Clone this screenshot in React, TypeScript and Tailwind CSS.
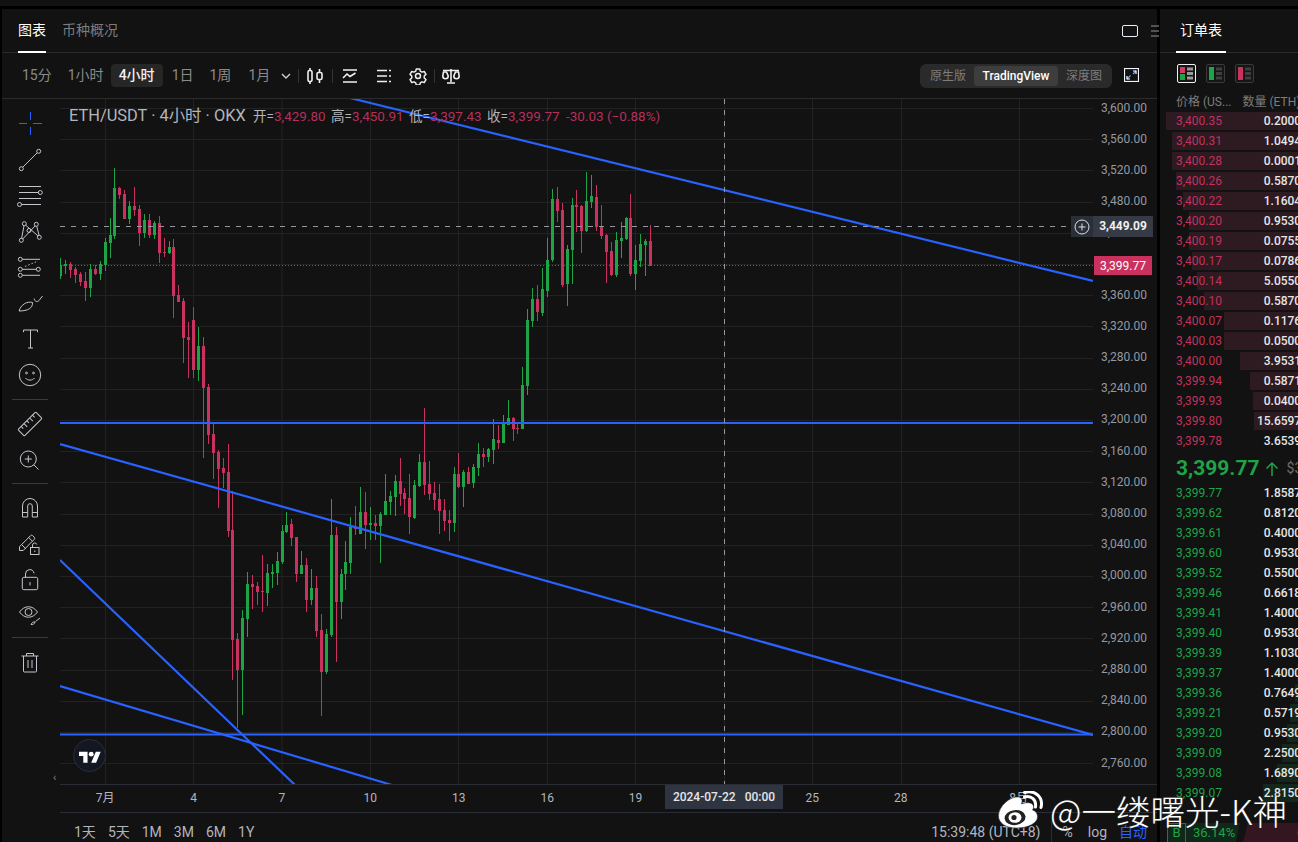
import type { ReactNode } from "react"

const UP = "#1fa347"
const DOWN = "#c9325f"
const BLUE = "#2962ff"

// rows are [center x, wick top, body top, body bottom, wick bottom, up?] read off 3x crops
type Row = [number, number, number, number, number, number]
const fromCrop = (ox: number, oy: number, rows: Row[]): Row[] =>
  rows.map(([x, a, b, c, d, u]) => [ox + x / 3, oy + a / 3, oy + b / 3, oy + c / 3, oy + d / 3, u])

const candles: Row[] = [
  ...fromCrop(60, 150, [
    [1, 324, 345, 378, 387, 1], [16, 330, 342, 348, 372, 1], [31, 336, 342, 360, 384, 0], [46, 351, 357, 375, 399, 0],
    [61, 366, 372, 396, 408, 0], [76, 366, 393, 414, 453, 0], [91, 342, 357, 414, 441, 1], [106, 345, 357, 372, 375, 0],
    [121, 333, 342, 372, 390, 1], [136, 264, 276, 345, 363, 1], [151, 204, 255, 279, 324, 1], [163, 54, 114, 258, 267, 1],
    [178, 111, 114, 135, 147, 0], [193, 120, 132, 207, 207, 0], [208, 153, 168, 207, 222, 1], [223, 111, 168, 180, 198, 0],
    [238, 165, 177, 249, 288, 0], [253, 192, 210, 249, 264, 1], [268, 192, 210, 255, 264, 0], [283, 213, 219, 255, 267, 1],
    [298, 198, 219, 309, 339, 0], [313, 264, 306, 309, 321, 0], [328, 273, 291, 309, 312, 1], [340, 267, 291, 438, 504, 0],
    [355, 405, 435, 456, 456, 0], [370, 444, 453, 564, 640, 0], [385, 516, 561, 570, 685, 0],
  ]),
  ...fromCrop(180, 340, [
    [40, -100, -60, 90, 114, 0], [55, -40, 18, 90, 123, 1], [70, -10, 18, 144, 354, 0], [85, 132, 141, 285, 312, 0],
    [100, 252, 282, 339, 417, 0], [115, 330, 336, 387, 504, 0], [130, 354, 384, 399, 444, 0], [145, 312, 396, 573, 591, 0],
    [157, 453, 570, 900, 1020, 0], [172, 879, 897, 990, 1164, 0], [187, 810, 834, 990, 1125, 1], [202, 696, 732, 837, 891, 1],
    [217, 705, 732, 741, 807, 0], [232, 726, 738, 756, 795, 0], [247, 645, 753, 756, 816, 0], [262, 672, 699, 759, 798, 1],
    [277, 672, 696, 702, 744, 1], [292, 636, 663, 699, 735, 1], [307, 555, 573, 666, 672, 1], [319, 516, 555, 576, 579, 1],
    [334, 537, 552, 594, 618, 0], [349, 591, 591, 702, 726, 0], [364, 633, 675, 702, 702, 1], [379, 654, 675, 780, 816, 0],
    [394, 687, 744, 780, 795, 1], [409, 708, 744, 873, 891, 0], [424, 822, 870, 996, 1128, 0], [439, 867, 882, 996, 1002, 1],
    [454, 477, 585, 885, 891, 1], [469, 561, 585, 786, 966, 0], [484, 687, 702, 786, 837, 1], [496, 603, 666, 702, 750, 1],
    [511, 531, 561, 669, 702, 1], [526, 498, 561, 567, 585, 0],
  ]),
  ...fromCrop(360, 350, [
    [1, 411, 486, 552, 552, 1], [16, 426, 486, 525, 597, 0], [31, 471, 519, 525, 570, 1], [46, 495, 519, 528, 570, 0],
    [61, 486, 492, 528, 640, 1], [76, 372, 453, 495, 495, 1], [91, 423, 438, 456, 495, 1], [106, 375, 393, 441, 498, 1],
    [121, 324, 393, 432, 468, 0], [133, 414, 429, 447, 492, 0], [148, 372, 444, 501, 552, 0], [163, 390, 405, 504, 507, 1],
    [178, 312, 336, 408, 411, 1], [193, 174, 336, 405, 435, 0], [208, 333, 402, 432, 450, 0], [223, 396, 429, 450, 480, 0],
    [238, 402, 447, 483, 552, 0], [253, 447, 480, 513, 543, 0], [268, 480, 510, 519, 573, 0], [283, 351, 372, 519, 546, 1],
    [295, 309, 372, 411, 414, 0], [310, 360, 366, 411, 471, 1], [325, 351, 366, 402, 402, 0], [340, 342, 351, 399, 414, 1],
    [355, 279, 312, 354, 378, 1], [370, 294, 312, 321, 351, 0], [385, 294, 297, 321, 336, 1], [400, 207, 267, 300, 342, 1],
    [415, 225, 270, 279, 297, 0], [430, 195, 222, 279, 279, 1], [445, 150, 204, 225, 225, 1], [460, 201, 204, 237, 273, 0],
    [472, 216, 234, 237, 252, 0], [487, 51, 105, 237, 237, 1],
  ]),
  ...fromCrop(500, 160, [
    [82, 447, 480, 678, 705, 1], [97, 384, 417, 483, 501, 1], [112, 375, 417, 456, 483, 0], [127, 324, 387, 459, 468, 1],
    [142, 234, 300, 393, 411, 1], [157, 87, 117, 300, 306, 1], [172, 81, 117, 153, 186, 0], [187, 129, 150, 375, 381, 0],
    [202, 255, 267, 372, 438, 1], [217, 114, 135, 270, 372, 1], [229, 90, 135, 141, 216, 0], [244, 135, 138, 213, 279, 0],
    [259, 36, 123, 213, 216, 1], [274, 45, 108, 126, 144, 1], [289, 75, 111, 201, 213, 0], [304, 135, 201, 228, 237, 0],
    [319, 222, 225, 276, 369, 0], [334, 246, 273, 345, 348, 0], [349, 216, 240, 345, 351, 1], [364, 186, 234, 243, 294, 1],
    [379, 171, 174, 237, 240, 1], [391, 102, 174, 342, 348, 0], [406, 255, 300, 342, 390, 1], [421, 222, 252, 303, 321, 1],
    [436, 237, 243, 255, 348, 1], [451, 195, 243, 318, 318, 0],
  ]),
]

const asks = [
  ["3,400.35", "0.20000", 1166], ["3,400.31", "1.04940", 1172], ["3,400.28", "0.00010", 1172], ["3,400.26", "0.58700", 1176],
  ["3,400.22", "1.16040", 1183], ["3,400.20", "0.95300", 1189], ["3,400.19", "0.07550", 1189], ["3,400.17", "0.07860", 1192],
  ["3,400.14", "5.05500", 1197], ["3,400.10", "0.58700", 1204], ["3,400.07", "0.11760", 1224], ["3,400.03", "0.05000", 1224],
  ["3,400.00", "3.95310", 1240], ["3,399.94", "0.58710", 1250], ["3,399.93", "0.04000", 1253], ["3,399.80", "15.65970", 1254],
  ["3,399.78", "3.65390", 1298],
] as const

const bids = [
  ["3,399.77", "1.85870", 1298], ["3,399.62", "0.81200", 1298], ["3,399.61", "0.40000", 1298], ["3,399.60", "0.95300", 1298],
  ["3,399.52", "0.55000", 1298], ["3,399.46", "0.66180", 1298], ["3,399.41", "1.40000", 1298], ["3,399.40", "0.95300", 1298],
  ["3,399.39", "1.10300", 1298], ["3,399.37", "1.40000", 1297], ["3,399.36", "0.76490", 1295], ["3,399.21", "0.57190", 1290],
  ["3,399.20", "0.95300", 1287], ["3,399.09", "2.25000", 1282], ["3,399.08", "1.68900", 1277], ["3,399.07", "2.81500", 1263],
] as const

const priceLabels = [
  "3,600.00", "3,560.00", "3,520.00", "3,480.00", "3,440.00", "3,400.00", "3,360.00", "3,320.00", "3,280.00", "3,240.00", "3,200.00",
  "3,160.00", "3,120.00", "3,080.00", "3,040.00", "3,000.00", "2,960.00", "2,920.00", "2,880.00", "2,840.00", "2,800.00", "2,760.00",
]

function Chart() {
  const gridX = [105, 193, 281.5, 370, 458, 547, 635, 724, 812, 901, 1019]
  const gridY = priceLabels.map((_, i) => Math.round(108 + i * 31.2))
  return (
    <svg width="1033" height="685" viewBox="60 99 1033 685" className="block shrink-0">
      {gridY.map((y) => (
        <line key={y} x1="60" x2="1093" y1={y + 0.5} y2={y + 0.5} stroke="#222222" />
      ))}
      {gridX.map((x) => (
        <line key={x} x1={x + 0.5} x2={x + 0.5} y1="99" y2="784" stroke="#222222" />
      ))}
      <line x1="60" x2="1093" y1="265.5" y2="265.5" stroke={DOWN} strokeDasharray="1 2" />
      {candles.map(([x, a, b, c, d, up], i) => (
        <g key={i} fill={up ? UP : DOWN} shapeRendering="crispEdges">
          <rect x={Math.round(x)} y={a} width="1" height={d - a} />
          <rect x={Math.round(x) - 1} y={b} width="3" height={Math.max(c - b, 1)} />
        </g>
      ))}
      <g stroke={BLUE} strokeWidth="2.2">
        <line x1="350" y1="98" x2="1093" y2="281" />
        <line x1="60" y1="423" x2="1093" y2="423" />
        <line x1="60" y1="444" x2="1093" y2="735" />
        <line x1="60" y1="734.5" x2="1093" y2="734.5" />
        <line x1="60" y1="560" x2="295" y2="785" />
        <line x1="60" y1="686" x2="392" y2="785" />
      </g>
      <line x1="60" x2="1070" y1="226.5" y2="226.5" stroke="#9598a1" strokeDasharray="5 6" />
      <line x1="724.5" x2="724.5" y1="99" y2="784" stroke="#9598a1" strokeDasharray="5 6" />
    </svg>
  )
}

function Tool({ h = "h-[36px]", children }: { h?: string; children: ReactNode }) {
  return (
    <div className={`${h} flex items-center justify-center shrink-0`}>
      <svg width="28" height="28" viewBox="0 0 28 28" fill="none" stroke="#c4c6cc" strokeWidth="1">
        {children}
      </svg>
    </div>
  )
}

function LeftToolbar() {
  return (
    <div className="w-[58px] shrink-0 flex flex-col pt-[6px] pr-[2px]">
      <Tool>
        <path d="M3 14.500h8M17 14.500h9M14.500 3v8M14.500 18v8" stroke={BLUE} strokeWidth="1" shapeRendering="crispEdges" />
      </Tool>
      <Tool>
        <path d="M6.800 22.200 21.200 7.800" />
        <circle cx="5.300" cy="23.700" r="2" />
        <circle cx="22.700" cy="6.300" r="2" />
      </Tool>
      <Tool>
        <path d="M3 5.500h22M3 11.500h19.500M3 17.500h22M5.500 23.500h19.500" />
        <circle cx="24.300" cy="11.500" r="2" />
        <circle cx="3.500" cy="23.500" r="2" />
      </Tool>
      <Tool>
        <path d="M5.600 21.300 8 8.800M9.700 8.200l12.300 10.700M19 9 6.700 22M20.700 9.200l2.400 9.100" />
        <circle cx="8.300" cy="6.700" r="2" />
        <circle cx="20.300" cy="7.300" r="2" />
        <circle cx="5.300" cy="23.300" r="2" />
        <circle cx="23.300" cy="20.300" r="2" />
        <circle cx="13" cy="13.500" r="2" />
      </Tool>
      <Tool>
        <path d="M6.300 6.300H24M6.300 16.300h14M6.300 22.300H24" />
        <path d="M9 13.500 22 8" strokeDasharray="1.500 2" />
        <circle cx="4.300" cy="6.300" r="2" />
        <circle cx="4.300" cy="16.300" r="2" />
        <circle cx="4.300" cy="22.300" r="2" />
        <circle cx="22.300" cy="16.300" r="2" />
      </Tool>
      <Tool>
        <path d="M3 22C5 15.500 11 12 16.500 13.500 17 19 12 22 3 22Z" />
        <path d="M18.200 9.500c.5 3.300 3 4 4.800 2l3.500-4.500" />
      </Tool>
      <Tool>
        <path d="M7.500 5h14M7.500 5v2.200M21.500 5v2.200M14.500 5v18M12 23h5" />
      </Tool>
      <Tool>
        <circle cx="14" cy="14" r="10.700" />
        <circle cx="10.500" cy="12" r="0.900" />
        <circle cx="17.500" cy="12" r="0.900" />
        <path d="M9.500 17c2 2.800 7 2.800 9 0" />
      </Tool>
      <div className="h-px bg-[#3a3a3e] mx-[10px] my-[6px] shrink-0" />
      <Tool>
        <g transform="rotate(-45 14 14)">
          <rect x="1.500" y="9.500" width="25" height="9" rx="1" />
          <path d="M6 9.500v3M10 9.500v4.500M14 9.500v3M18 9.500v4.500M22 9.500v3" />
        </g>
      </Tool>
      <Tool h="h-[35px]">
        <circle cx="12.300" cy="13" r="8" />
        <path d="M18 19l4.500 4.500M12.300 9.500v7M8.800 13h7" />
      </Tool>
      <div className="h-px bg-[#3a3a3e] mx-[10px] my-[6px] shrink-0" />
      <Tool>
        <path d="M6.500 23V12a7.500 7.500 0 0 1 15 0v11h-5.200V12a2.300 2.300 0 0 0-4.600 0v11ZM6.500 18.500h5.200M16.300 18.500h5.200" />
      </Tool>
      <Tool>
        <path d="M3.500 20.500v-3.800L14.500 5.700a1.500 1.500 0 0 1 2.200 0l1.500 1.500a1.500 1.500 0 0 1 0 2.200L7.200 20.500ZM6 15l3.700 3.700M12.700 7.500l3.700 3.700" />
        <rect x="14.500" y="17.500" width="8.500" height="7" />
        <path d="M16.500 17.500v-2.500a2.200 2.200 0 0 1 4.300-.5M18.800 20.500v1.500" />
      </Tool>
      <Tool h="h-[35px]">
        <rect x="6.300" y="11.300" width="15.400" height="12.400" rx="1.500" />
        <path d="M9.500 11.300V8a4.300 4.300 0 0 1 8.500-1M14 16.500v2.500" strokeLinecap="round" />
      </Tool>
      <Tool h="h-[34px]">
        <path d="M3.500 12c5-7 13-7 18 0-5 7-13 7-18 0Z" />
        <circle cx="12.500" cy="12" r="3.500" />
        <path d="M15 24.500c1-2 2.500-3 4-2.500-.5 2-2 3-4 2.500ZM19.500 21.500l4.500-3.500" />
      </Tool>
      <div className="h-px bg-[#3a3a3e] mx-[10px] my-[6px] shrink-0" />
      <Tool>
        <path d="M5.500 8h17M10.500 8V5.500h7V8M7.500 8v15a1 1 0 0 0 1 1h11a1 1 0 0 0 1-1V8M12 12v8M16 12v8" />
      </Tool>
    </div>
  )
}

function TopTools() {
  return (
    <>
      <svg width="20" height="18" viewBox="0 0 20 18" fill="none" stroke="#f0f0f0" strokeWidth="1.600" className="ml-[6px]">
        <rect x="3" y="3.500" width="4" height="11" rx="1.500" />
        <rect x="12" y="5.500" width="5" height="7" rx="1.500" />
        <path d="M5 1v2.500M5 14.500V17M14.500 2v3.500M14.500 12.500V16" />
      </svg>
      <div className="w-px h-[14px] bg-[#333] mx-[7px]" />
      <svg width="18" height="18" viewBox="0 0 18 18" fill="none" stroke="#f0f0f0" strokeWidth="1.600" className="ml-[1px]">
        <path d="M2 3h14M2 15h14M2 11l4-4 3 2.500 5.500-3.500" />
      </svg>
      <svg width="18" height="18" viewBox="0 0 18 18" fill="none" stroke="#f0f0f0" strokeWidth="1.600" className="ml-[16px]">
        <path d="M2 3.500h10M14 3.500h2M2 9h10M14 9h2M2 14.500h10M14 14.500h2" />
      </svg>
      <svg width="18" height="18" viewBox="0 0 24 24" fill="none" stroke="#f0f0f0" strokeWidth="2" strokeLinejoin="round" className="ml-[16px]">
        <path d="M9.700 2.500h4.600l.7 3 2.300 1.300 3-.9 2.300 4-2.300 2.100v2.600l2.300 2.100-2.300 4-3-.9-2.300 1.300-.7 3H9.700l-.7-3-2.300-1.300-3 .9-2.300-4 2.300-2.100v-2.600L1.400 9.900l2.300-4 3 .9L9 5.500Z" />
        <circle cx="12" cy="12" r="3.300" />
      </svg>
      <div className="w-px h-[14px] bg-[#333] mx-[7px]" />
      <svg width="18" height="18" viewBox="0 0 18 18" fill="none" stroke="#f0f0f0" strokeWidth="1.600">
        <path d="M1 3.500h16M9 2v13M5 16h8" />
        <path d="M1.500 5 .8 9a2.700 2.700 0 0 0 5.400 0L4.500 5ZM13.500 5l-1.700 4a2.700 2.700 0 0 0 5.400 0L16.500 5Z" />
      </svg>
    </>
  )
}

function Legend() {
  const pairs = [
    ["开=", "3,429.80"],
    ["高=", "3,450.91"],
    ["低=", "3,397.43"],
    ["收=", "3,399.77"],
  ]
  return (
    <div className="absolute left-[9px] top-[8px] flex items-center text-[13.500px] leading-[18px] text-[#b2b5be] whitespace-nowrap">
      <span className="text-[16.400px] w-[184px]">ETH/USDT · 4小时 · OKX</span>
      {pairs.map(([k, v]) => (
        <span key={k} className="w-[78px]">
          {k}
          <span className="text-[#b5305a]">{v}</span>
        </span>
      ))}
      <span className="text-[#b5305a] ml-px">-30.03 (−0.88%)</span>
    </div>
  )
}

function BookRow({ price, qty, from, up }: { price: string; qty: string; from: number; up?: boolean }) {
  const barLeft = from - 1160
  return (
    <div className="relative h-[20px] flex items-center justify-between pl-[16px] text-[12px] shrink-0">
      {from < 1298 && (
        <div
          className={`absolute top-px bottom-px right-0 ${up ? "bg-[#13271a]" : "bg-[#2e1a21]"}`}
          style={{ left: barLeft }}
        />
      )}
      <span className={`relative ${up ? "text-[#1fa347]" : "text-[#c0335f]"}`}>{price}</span>
      <span className="relative font-medium text-[#e6e6e6] mr-[-10px]">{qty}</span>
    </div>
  )
}

function BookIcon({ active, left, right }: { active?: boolean; left: string; right?: string }) {
  return (
    <svg width="19" height="19" viewBox="0 0 19 19" className="shrink-0">
      <rect x="0.500" y="0.500" width="18" height="18" rx="1.500" fill="#161616" stroke={active ? "#f0f0f0" : "#3a3a3a"} />
      <rect x="3" y="3" width="5" height={right ? 6 : 13} fill={left} />
      {right && <rect x="3" y="10" width="5" height="6" fill={right} />}
      <path d="M10 3.500h6v3h-6zM10 8h6v3h-6zM10 12.500h6v3h-6z" fill={active ? "#9a9a9a" : "#3f3f3f"} />
    </svg>
  )
}

function OrderBook() {
  return (
    <div className="flex-1 min-w-0 relative overflow-hidden bg-[#121212] flex flex-col">
      <div className="h-[44px] shrink-0 border-b border-[#2b2b2b] relative">
        <span className="absolute left-[20px] top-[11px] text-[14px] leading-[20px] text-white">订单表</span>
        <div className="absolute left-[16px] bottom-[-1px] w-[50px] h-[2px] bg-white" />
      </div>
      <div className="flex gap-[10px] pl-[17px] pt-[11px] h-[40px] shrink-0">
        <BookIcon active left="#d13a68" right={UP} />
        <BookIcon left={UP} />
        <BookIcon left={DOWN} />
      </div>
      <div className="h-[18px] flex items-center text-[12px] text-[#7d7d7d] pl-[16px] gap-[11px] whitespace-nowrap shrink-0">
        <span>价格 (US...</span>
        <span>数量 (ETH)</span>
      </div>
      <div className="flex flex-col">
        {asks.map(([p, q, f]) => (
          <BookRow key={p} price={p} qty={q} from={f} />
        ))}
      </div>
      <div className="h-[35px] flex items-center pl-[16px] shrink-0 whitespace-nowrap">
        <span className="text-[21px] font-bold text-[#1fa347]">3,399.77</span>
        <svg width="14" height="16" viewBox="0 0 14 16" fill="none" stroke="#1fa347" strokeWidth="1.500" className="ml-[5px] shrink-0">
          <path d="M7 15V2M1.500 7.500 7 2l5.500 5.500" />
        </svg>
        <span className="ml-[8px] text-[14px] text-[#6e6e6e]">$3,399</span>
      </div>
      <div className="flex flex-col mt-[-3px]">
        {bids.map(([p, q, f]) => (
          <BookRow key={p} price={p} qty={q} from={f} up />
        ))}
      </div>
      <div className="absolute left-0 right-0 bottom-0 h-[19px] flex items-stretch text-[13px] whitespace-nowrap">
        <div className="ml-[7px] w-[19px] border-x border-t border-[#1b7a3c] bg-[#10281a] text-[#1fa347] flex items-center justify-center">B</div>
        <div className="w-[54px] bg-[#10281a] text-[#1fa347] pl-[7px] flex items-center [clip-path:polygon(0_0,100%_0,92%_100%,0_100%)]">36.14%</div>
        <div className="flex-1 ml-[3px] bg-[#33161f] text-[#c0335f] flex items-center justify-end [clip-path:polygon(8%_0,100%_0,100%_100%,0_100%)] mr-[-6px]">6</div>
      </div>
    </div>
  )
}

function Watermark() {
  return (
    <div className="absolute left-[998px] top-[791px] flex items-center gap-[7px] pointer-events-none">
      <svg width="45" height="38" viewBox="0 0 44 38">
        <path d="M18 37C7 37 0 32 0 25 0 15 12 5 20 6c4 .6 4 4 3 7 5-2 11-2 12 2 .4 1.600-.2 2.800-1 4 3 1 5 3 5 7 0 6-9 11-21 11Z" fill="#fff" stroke="#333" strokeWidth="0.600" />
        <ellipse cx="16.500" cy="26.500" rx="10.500" ry="7.500" fill="#222" transform="rotate(-8 17 26)" />
        <ellipse cx="16.500" cy="26.500" rx="6.500" ry="5.200" fill="#fff" />
        <circle cx="15.500" cy="26.500" r="2.600" fill="#222" />
        <path d="M26 6c7-2 12 3 11 10M26 1.500c11-3 19 5 16.500 15" fill="none" stroke="#fff" strokeWidth="3" strokeLinecap="round" />
      </svg>
      <span className="text-[34.500px] leading-[38px] font-light text-white whitespace-nowrap [font-family:'Noto_Sans_CJK_SC',sans-serif] [text-shadow:0_0_2px_#333]">
        @一缕曙光-K神
      </span>
    </div>
  )
}

export default function App() {
  const times = ["4", "7", "10", "13", "16", "19", "22", "25", "28"]
  const font = "[font-family:Roboto,'Noto_Sans_CJK_SC',sans-serif]"
  return (
    <div className={`relative w-[1298px] h-[842px] overflow-hidden bg-black flex flex-col ${font}`}>
      <div className="h-[6px] shrink-0 bg-[#121212]" />
      <div className="flex-1 flex mt-[3px] min-h-0">
        {/* chart side */}
        <div className="ml-[2px] w-[1155px] shrink-0 bg-[#121212] flex flex-col">
          <div className="h-[44px] shrink-0 border-b border-[#2b2b2b] flex items-center pl-[16px] relative text-[14px]">
            <span className="relative text-white h-full flex items-center">
              图表
              <span className="absolute left-0 right-0 bottom-[-1px] h-[2px] bg-white" />
            </span>
            <span className="ml-[16px] text-[#7d7d7d]">币种概况</span>
            <div className="ml-auto flex items-center gap-[13px] mr-[-2px]">
              <div className="w-[16px] h-[12px] mt-px border-[1.500px] border-[#e8eef8] rounded-[2px]" />
              <svg width="8" height="14" viewBox="0 0 8 14" stroke="#6a6a6a" strokeWidth="1.500">
                <path d="M0 2h8M0 7h8M0 12h8" />
              </svg>
            </div>
          </div>
          <div className="h-[46px] shrink-0 border-b border-[#2b2b2b] flex items-center pl-[20px] text-[14px] text-[#8a8a8a] relative whitespace-nowrap">
            <span>15分</span>
            <span className="ml-[16px]">1小时</span>
            <span className="ml-[7px] w-[52px] h-[23px] rounded-[4px] bg-[#262626] text-[#f0f0f0] font-medium flex items-center justify-center">4小时</span>
            <span className="ml-[9px]">1日</span>
            <span className="ml-[16px]">1周</span>
            <span className="ml-[17px]">1月</span>
            <svg width="10" height="6" viewBox="0 0 10 6" fill="none" stroke="#d0d0d0" strokeWidth="1.400" className="ml-[11px]">
              <path d="M1 1l4 4 4-4" />
            </svg>
            <div className="w-px h-[14px] bg-[#333] ml-[7px]" />
            <TopTools />
            <div className="ml-auto mr-[45px] h-[24px] w-[192px] rounded-[6px] bg-[#2a2a2a] flex items-center justify-between px-[2px] text-[12px]">
              <span className="w-[52px] text-center text-[#7d7d7d]">原生版</span>
              <span className="w-[84px] h-[20px] rounded-[4px] bg-[#3d3d3d] text-white font-medium flex items-center justify-center">TradingView</span>
              <span className="w-[52px] text-center text-[#7d7d7d]">深度图</span>
            </div>
            <svg width="15" height="14" viewBox="0 0 15 14" fill="none" className="absolute left-[1122px] top-[15px]">
              <rect x="0.500" y="0.500" width="14" height="13" stroke="#f0f4fa" strokeWidth="1.200" />
              <path d="M3 11l3.500-3.500M9 6l3-3" stroke="#6d9bff" strokeWidth="1.200" />
              <path d="M3 8v3h3M9 3h3v3" stroke="#fff" strokeWidth="1.200" />
            </svg>
          </div>
          <div className="flex flex-1 min-h-0">
            <LeftToolbar />
            <div className="flex-1 min-w-0 flex flex-col">
              <div className="h-[685px] shrink-0 flex relative overflow-hidden">
                <div className="shrink-0 w-[1033px] relative">
                  <Chart />
                </div>
                <div className="flex-1 flex flex-col mt-[-7px] text-[12px] text-[#9598a1] pl-[8px]">
                  {priceLabels.map((p) => (
                    <div key={p} className="h-[31.2px] shrink-0 flex items-center">
                      {p}
                    </div>
                  ))}
                </div>
                <Legend />
                <div className="absolute left-[13px] top-[640px] w-[33px] h-[33px] rounded-full bg-[#131722] border border-[#2a2e39] flex items-center justify-center">
                  <svg width="22" height="14" viewBox="0 0 36 22" fill="#fff">
                    <path d="M14 22H7V11H0V4h14v18ZM28 22h-8l7.500-18h8L28 22Z" />
                    <circle cx="20" cy="8" r="4" />
                  </svg>
                </div>
                <div className="absolute left-[1011px] top-[117px] w-[22px] h-[21px] bg-[#2a2e39] flex items-center justify-center">
                  <svg width="16" height="16" viewBox="0 0 16 16" fill="none" stroke="#e0e0e0">
                    <circle cx="8" cy="8" r="7" />
                    <path d="M8 4.500v7M4.500 8h7" />
                  </svg>
                </div>
                <div className="absolute left-[1033px] top-[117px] w-[60px] h-[21px] pb-[2px] bg-[#363a45] text-[12px] font-bold text-[#f0f0f0] flex items-center justify-center">
                  3,449.09
                </div>
                <div className="absolute left-[1034px] top-[157px] w-[58px] h-[19px] bg-[#c9325f] text-[12px] text-white flex items-center justify-center">
                  3,399.77
                </div>
              </div>
              <div className="h-[29px] shrink-0 border-y border-[#2a2d35] flex items-center pb-[2px] relative text-[12px] text-[#b2b5be] pl-px">
                <span className="absolute left-[-7px] top-[-13px] text-[11px] leading-[12px] text-[#8a8a8a]">‹</span>
                <span className="w-[88.400px] text-center">7月</span>
                {times.map((t) => (
                  <span key={t} className={`w-[88.400px] text-center ${t === "22" ? "invisible" : ""}`}>
                    {t}
                  </span>
                ))}
                <span className="ml-[29.500px] w-[88.400px] text-center">8月</span>
                <div className="absolute left-[605px] top-0 w-[118px] h-[24px] bg-[#2f3540] text-[#e6e6e6] font-medium flex items-center justify-center gap-[9px]">
                  <span>2024-07-22</span>
                  <span>00:00</span>
                </div>
              </div>
              <div className="flex-1 flex items-center pl-[14px] pt-[8px] text-[14px] text-[#b2b5be]">
                <div className="flex gap-[12px]">
                  <span>1天</span>
                  <span>5天</span>
                  <span>1M</span>
                  <span>3M</span>
                  <span>6M</span>
                  <span>1Y</span>
                </div>
                <span className="ml-auto mr-[11px]">15:39:48 (UTC+8)</span>
                <div className="w-px h-[22px] bg-[#2a2d35]" />
                <span className="ml-[10px]">%</span>
                <span className="ml-[15px]">log</span>
                <span className="ml-[12px] mr-[10px] text-[#2962ff]">自动</span>
              </div>
            </div>
          </div>
        </div>
        <div className="w-[3px] shrink-0" />
        <OrderBook />
      </div>
      <Watermark />
    </div>
  )
}
